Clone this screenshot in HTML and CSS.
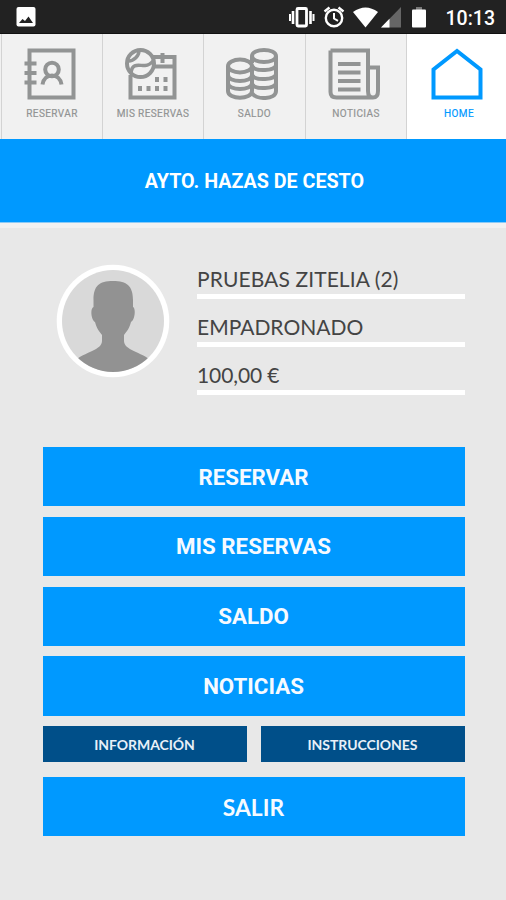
FILE: index.html
```html
<!DOCTYPE html>
<html lang="es">
<head>
<meta charset="utf-8">
<title>Ayto. Hazas de Cesto</title>
<link rel="stylesheet" href="styles.css">
</head>
<body>
<header class="status">
  <svg class="status-photo" width="22" height="24" viewBox="0 0 22 24"><rect x="1.500" y="2" width="19" height="19.500" rx="2" fill="#fff"/><path d="M4 18l3.500-4 2.500 2 3.500-4.500 4.500 6.500z" fill="#222"/></svg>
  <svg class="status-icons" width="144" height="34" viewBox="285 0 144 34">
    <g fill="none" stroke="#fff">
      <rect x="297" y="8.500" width="9.500" height="17.500" rx="1" stroke-width="2.800"/>
      <path d="M293 11v13M310.500 11v13" stroke-width="2.600"/>
      <path d="M290 14v7M313.500 14v7" stroke-width="2"/>
      <circle cx="334" cy="18" r="8.200" stroke-width="2.400"/>
      <path d="M334 13v5.500l4 2.300" stroke-width="2"/>
      <path d="M324.500 11.500l5-4M338.500 7.500l5 4" stroke-width="2.400"/>
    </g>
    <path d="M353 12Q365.500 3 378 12L365.500 27.500z" fill="#fff"/>
    <path d="M401 7v20.500h-20z" fill="#666"/><path d="M389.500 18.800v8.700H381z" fill="#fff"/>
    <path d="M416 7h6v3h-6z" fill="#777"/><rect x="412" y="9.500" width="14" height="18" rx="1" fill="#fff"/>
  </svg>
  <span class="clock">10:13</span>
</header>
<nav class="tabs">
  <a class="tab"><svg width="52" height="52" viewBox="0 0 52 52"><path d="M5.500 2.500h44v47h-44z"/><path d="M.5 15.500h12M.5 25h12M.5 34.500h12" stroke-width="4"/><circle cx="28" cy="21.500" r="6.800"/><path d="M18.500 36.500c1-6 5-9 9.500-9s8.500 3 9.500 9"/></svg><span class="tab-label">RESERVAR</span></a>
  <a class="tab"><svg width="52" height="52" viewBox="0 0 52 52"><path d="M28 9h21.500v40.500h-44V27M27 18.500h22M37.500 5v10"/><circle cx="15.500" cy="15.500" r="13.500"/><path d="M3.500 13C9 13 14 8 14 2.500M6 25C7 14 15 18 20 17.500Q25 17 28 13" stroke-width="3.500"/><path d="M30 31.500h4M38.500 31.500h4M13 40.500h4M21.500 40.500h4M30 40.500h4M38.500 40.500h4" stroke-width="5"/></svg><span class="tab-label">MIS RESERVAS</span></a>
  <a class="tab"><svg width="52" height="52" viewBox="0 0 52 52"><ellipse cx="14" cy="18" rx="12" ry="6.500"/><path d="M2 18v25c0 9 24 9 24 0V18M2 27c0 8 24 8 24 0M2 35c0 8 24 8 24 0"/><path d="M26 15V8c0-8 24-8 24 0v35c0 9-20 9-24 2M26 8c0 8 24 8 24 0M26 18c3 6 24 5 24-1M26 27c3 6 24 5 24-1M26 36c3 6 24 5 24-1"/></svg><span class="tab-label">SALDO</span></a>
  <a class="tab"><svg width="52" height="52" viewBox="0 0 52 52"><path d="M2.500 2.500H40V43q0 6.500 5 6.500t5-6.500V19.500H40M2.500 2.500V44q0 5.500 6 5.500H45"/><path d="M10 16h22.500M10 24.500h22.500M10 33h22.500M10 41.500h22.500"/></svg><span class="tab-label">NOTICIAS</span></a>
  <a class="tab tab-active"><svg width="52" height="52" viewBox="0 0 52 52"><path d="M2.500 49.500V21.500L26 3l23.500 18.500v28z"/></svg><span class="tab-label">HOME</span></a>
</nav>
<h1 class="title"><span>AYTO. HAZAS DE CESTO</span></h1>
<main>
  <section class="profile">
    <svg class="avatar" width="114" height="114" viewBox="0 0 114 114"><defs><clipPath id="face"><circle cx="57" cy="57" r="51"/></clipPath></defs><circle cx="57" cy="57" r="56.300" fill="#fff"/><circle cx="57" cy="57" r="51" fill="#d9d9d9"/><path clip-path="url(#face)" fill="#929292" d="M37.500 36C37.500 22 43 17 57 17s20 5 20 19v7c3 1 2 13-2 15-2 7-4 9-7 13v6c0 9 17 11 28 20v12H18V97c11-9 28-11 28-20v-6c-3-4-5-6-7-13-4-2-5-14-1.500-15z"/></svg>
    <div class="details"><div class="detail name">PRUEBAS ZITELIA (2)</div><div class="detail">EMPADRONADO</div><div class="detail money">100,00 €</div></div>
  </section>
  <section class="actions">
    <a class="btn">RESERVAR</a>
    <a class="btn">MIS RESERVAS</a>
    <a class="btn">SALDO</a>
    <a class="btn">NOTICIAS</a>
    <div class="pair"><a class="small">INFORMACIÓN</a><a class="small">INSTRUCCIONES</a></div>
    <a class="btn exit">SALIR</a>
  </section>
</main>
</body>
</html>
```
FILE: styles.css
```css
* { box-sizing: border-box; }
body { margin: 0; height: 900px; background: #e8e8e8; font-family: Roboto, "Liberation Sans", sans-serif; overflow: hidden; }
svg { display: block; flex: none; }
.status { height: 34px; background: #222; border-bottom: 1px solid #111; display: flex; align-items: center; padding: 0 11px 0 15px; color: #fff; }
.status-icons { margin-left: auto; }
.clock { width: 50px; margin-left: 16px; text-align: right; font-size: 19.500px; font-weight: 500; line-height: 34px; padding-top: 4px; }
.tabs { height: 105px; display: grid; grid-template-columns: 101px 101px 102px 101px 100px; padding-left: 1px; background: #f1f1f1; }
.tab { display: flex; flex-direction: column; align-items: center; padding-top: 14px; border-left: 1px solid #d3d3d3; color: #929494; }
.tab svg { margin-right: 5px; fill: none; stroke: currentColor; stroke-width: 4; }
.tab-label { margin-top: 8px; font-size: 10px; line-height: 12px; white-space: nowrap; letter-spacing: .4px; font-weight: 400; -webkit-text-stroke: .2px; }
.tab-active { background: #fff; color: #0099ff; padding-left: 5px; }
.title { margin: 0; height: 84px; background: #0099ff; display: flex; align-items: center; justify-content: center; color: #fff; font-size: 19.700px; font-weight: 700; border-bottom: 1px solid #8bcaf6; box-shadow: 0 5px 0 #f1f1f1; padding: 1px 0 0 3px; }
main { padding: 41px 41.500px 0 42.500px; }
.profile { display: flex; height: 183px; padding-left: 13.500px; }
.details { margin-left: 27px; flex: 1; font-family: Lato, "Liberation Sans", sans-serif; color: #444; }
.detail { height: 48px; padding-bottom: 1px; border-bottom: 5px solid #fff; font-size: 21px; line-height: 29px; display: flex; align-items: flex-end; }
.name { height: 35px; letter-spacing: .1px; }
.money { letter-spacing: -.1px; }
.actions { display: flex; flex-direction: column; gap: 10.500px; }
.btn { height: 59.300px; background: #0099ff; color: #f6faff; font-size: 22.300px; font-weight: 700; display: flex; align-items: center; justify-content: center; }
.pair { display: grid; grid-template-columns: 1fr 1fr; gap: 14px; height: 36px; }
.small { background: #004f89; color: #e8f0f8; font: 700 14px Lato, sans-serif; letter-spacing: -.05px; display: flex; align-items: center; justify-content: center; }
.exit { margin-top: 4px; font-family: Lato, sans-serif; font-size: 22.800px; padding-top: 2px; }
```
